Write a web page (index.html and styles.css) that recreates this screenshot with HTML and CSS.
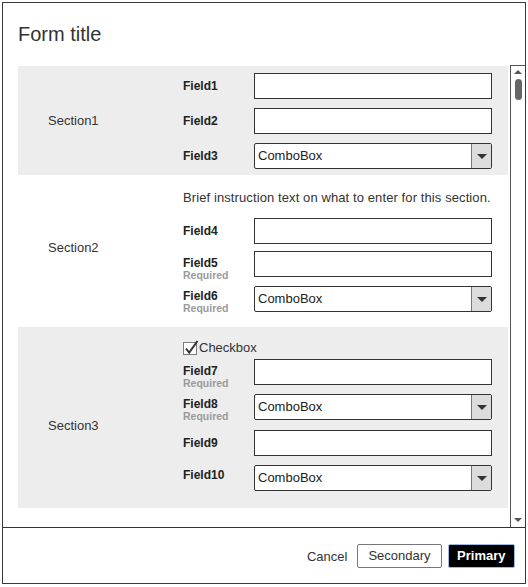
FILE: index.html
```html
<!DOCTYPE html>
<html lang="en">
<head>
<meta charset="utf-8">
<title>Form title</title>
<link rel="stylesheet" href="styles.css">
</head>
<body>
<div class="dialog">
  <div class="dialog__header">
    <h1 class="dialog__title">Form title</h1>
  </div>
  <div class="dialog__body">
    <div class="dialog__content">
      <section class="section section--shaded section--first">
        <div class="section__name">Section1</div>
        <div class="section__fields">
          <div class="row">
            <div class="field-label">Field1</div>
            <input class="input" type="text">
          </div>
          <div class="row">
            <div class="field-label">Field2</div>
            <input class="input" type="text">
          </div>
          <div class="row">
            <div class="field-label">Field3</div>
            <div class="combo"><span class="combo__value">ComboBox</span><span class="combo__button"><span class="combo__arrow"></span></span></div>
          </div>
        </div>
      </section>

      <section class="section section--second">
        <div class="section__name">Section2</div>
        <div class="section__fields">
          <p class="instruction">Brief instruction text on what to enter for this section.</p>
          <div class="row">
            <div class="field-label">Field4</div>
            <input class="input" type="text">
          </div>
          <div class="row row--gap7">
            <div class="field-label field-label--stacked">Field5<span class="required">Required</span></div>
            <input class="input" type="text">
          </div>
          <div class="row">
            <div class="field-label field-label--high">Field6<span class="required">Required</span></div>
            <div class="combo"><span class="combo__value">ComboBox</span><span class="combo__button"><span class="combo__arrow"></span></span></div>
          </div>
        </div>
      </section>

      <section class="section section--shaded section--third">
        <div class="section__name">Section3</div>
        <div class="section__fields">
          <label class="check">
            <svg class="check__box" width="16" height="16" viewBox="0 0 16 16" aria-hidden="true">
              <rect x="0.5" y="2.5" width="13" height="12" fill="#fff" stroke="#7a7a7a"/>
              <path d="M3 8.5 L6.2 12.5 L14.5 1" fill="none" stroke="#333" stroke-width="2"/>
            </svg>Checkbox
          </label>
          <div class="row row--gap3">
            <div class="field-label field-label--stacked">Field7<span class="required">Required</span></div>
            <input class="input" type="text">
          </div>
          <div class="row">
            <div class="field-label field-label--high">Field8<span class="required">Required</span></div>
            <div class="combo"><span class="combo__value">ComboBox</span><span class="combo__button"><span class="combo__arrow"></span></span></div>
          </div>
          <div class="row row--gap10">
            <div class="field-label">Field9</div>
            <input class="input" type="text">
          </div>
          <div class="row">
            <div class="field-label field-label--top">Field10</div>
            <div class="combo"><span class="combo__value">ComboBox</span><span class="combo__button"><span class="combo__arrow"></span></span></div>
          </div>
        </div>
      </section>
    </div>
    <div class="scrollbar">
      <span class="scrollbar__up"></span>
      <span class="scrollbar__thumb"></span>
      <span class="scrollbar__spacer"></span>
      <span class="scrollbar__down"></span>
    </div>
  </div>
  <div class="dialog__footer">
    <span class="btn-link">Cancel</span>
    <button class="btn btn--secondary" type="button">Secondary</button>
    <button class="btn btn--primary" type="button">Primary</button>
  </div>
</div>
</body>
</html>
```

FILE: styles.css
```css
html, body {
  margin: 0;
  padding: 0;
  background: #fff;
}

body {
  font-family: "Liberation Sans", Arial, sans-serif;
  color: #333;
}

.dialog {
  margin: 2px;
  width: 524px;
  height: 582px;
  box-sizing: border-box;
  border: 1px solid #3a3a3a;
  display: flex;
  flex-direction: column;
  background: #fff;
}

.dialog__header {
  flex: none;
  padding: 19px 15px;
}

.dialog__title {
  margin: 0;
  font-size: 20px;
  font-weight: normal;
  line-height: 24px;
  color: #333;
}

.dialog__body {
  flex: 1;
  min-height: 0;
  display: flex;
}

.dialog__content {
  flex: 1;
  min-width: 0;
  padding: 1px 2px 0 15px;
  overflow: hidden;
}

/* fake scrollbar */
.scrollbar {
  flex: none;
  width: 14px;
  border-left: 1px solid #555;
  border-top: 1px solid #555;
  display: flex;
  flex-direction: column;
  align-items: center;
}

.scrollbar__up {
  margin-top: 4px;
  width: 0;
  height: 0;
  border-left: 4px solid transparent;
  border-right: 4px solid transparent;
  border-bottom: 4px solid #555;
}

.scrollbar__thumb {
  margin-top: 5px;
  width: 7px;
  height: 21px;
  border-radius: 4px;
  background: #666;
}

.scrollbar__spacer {
  flex: 1;
}

.scrollbar__down {
  margin-bottom: 5px;
  width: 0;
  height: 0;
  border-left: 4px solid transparent;
  border-right: 4px solid transparent;
  border-top: 4px solid #555;
}

/* sections */
.section {
  display: flex;
  background: #fff;
}

.section--shaded {
  background: #ededed;
}

.section__name {
  flex: none;
  width: 135px;
  padding-left: 30px;
  align-self: center;
  font-size: 13px;
  line-height: 16px;
  color: #333;
}

.section--second .section__name {
  margin-bottom: 6px;
}

.section--third .section__name {
  margin-top: 17px;
}

.section__fields {
  flex: 1;
  padding-right: 16px;
}

.section--first .section__fields {
  padding-top: 7px;
  padding-bottom: 6px;
}

.section--second .section__fields {
  padding-top: 15px;
  padding-bottom: 15px;
}

.section--third .section__fields {
  padding-top: 13px;
  padding-bottom: 17px;
}

.instruction {
  margin: 0 0 12px;
  font-size: 13px;
  line-height: 16px;
  letter-spacing: 0.1px;
  color: #333;
}

.row {
  display: flex;
  align-items: flex-start;
  height: 26px;
}

.row + .row {
  margin-top: 9px;
}

.row.row--gap7 {
  margin-top: 7px;
}

.row.row--gap10 {
  margin-top: 10px;
}

.row.row--gap3 {
  margin-top: 3px;
}

.field-label {
  flex: none;
  width: 71px;
  font-size: 12px;
  font-weight: bold;
  line-height: 26px;
  color: #222;
}

.field-label--stacked {
  line-height: 13px;
  padding-top: 6px;
}

.field-label--high {
  line-height: 13px;
  padding-top: 4px;
}

.field-label--top {
  line-height: 14px;
  padding-top: 3px;
}

.required {
  display: block;
  font-size: 10.5px;
  line-height: 11px;
  color: #9a9a9a;
}

.input {
  width: 238px;
  height: 26px;
  margin: 0;
  padding: 0 3px;
  box-sizing: border-box;
  border: 1px solid #333;
  border-radius: 0;
  background: #fff;
  font: 13px "Liberation Sans", Arial, sans-serif;
  outline: none;
}

.combo {
  display: flex;
  width: 238px;
  height: 26px;
  box-sizing: border-box;
  border: 1px solid #333;
  border-radius: 2px;
  background: #fff;
  overflow: hidden;
}

.combo__value {
  flex: 1;
  padding-left: 3px;
  font-size: 13px;
  line-height: 24px;
  color: #222;
}

.combo__button {
  flex: none;
  width: 19px;
  border-left: 1px solid #777;
  background: #dcdcdc;
  display: flex;
  align-items: center;
  justify-content: center;
}

.combo__arrow {
  width: 0;
  height: 0;
  border-left: 5px solid transparent;
  border-right: 5px solid transparent;
  border-top: 5px solid #333;
  margin-top: 1px;
}

.check {
  display: flex;
  align-items: center;
  font-size: 13px;
  line-height: 16px;
  color: #333;
}

.check__box {
  display: block;
  flex: none;
}

/* footer */
.dialog__footer {
  flex: none;
  height: 55px;
  border-top: 1px solid #333;
  display: flex;
  justify-content: flex-end;
  align-items: center;
  padding-right: 10px;
}

.btn-link {
  font-size: 13px;
  line-height: 16px;
  color: #333;
  margin-right: 10px;
  margin-top: 2px;
}

.btn {
  height: 24px;
  margin: 0;
  box-sizing: border-box;
  border-radius: 2px;
  padding: 0 10px;
  font: 13px/22px "Liberation Sans", Arial, sans-serif;
  cursor: pointer;
}

.btn--secondary {
  background: #fff;
  border: 1px solid #777;
  color: #333;
  margin-right: 6px;
}

.btn--primary {
  background: #000;
  border: 1px solid #9bbbe3;
  color: #fff;
  font-weight: bold;
  padding: 0 8.5px;
}
```
